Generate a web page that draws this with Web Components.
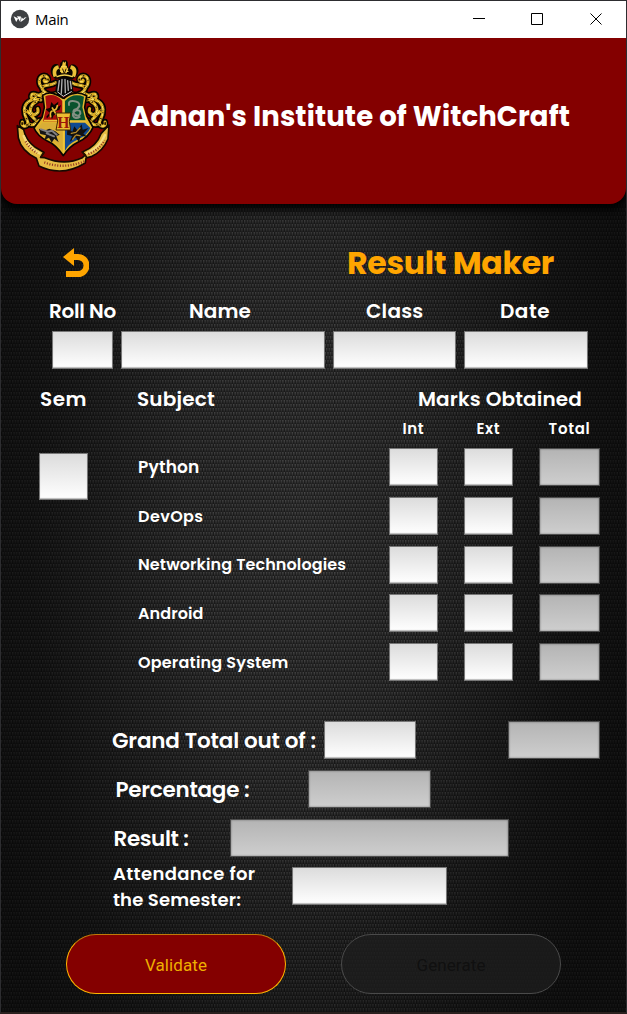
<!DOCTYPE html>
<html lang="en">
<head>
<meta charset="utf-8">
<title>Main</title>
<style>
html,body{margin:0;padding:0;background:#111}
body{font-family:Poppins,Inter,"Open Sans",sans-serif;color:#fff;overflow:hidden}
</style>
</head>
<body>
<app-window></app-window>
<script>
function define(name, html, extra) {
  customElements.define(name, class extends HTMLElement {
    connectedCallback() {
      if (this.shadowRoot) return;
      this.attachShadow({mode: 'open'}).innerHTML = html;
      if (extra) extra(this, this.shadowRoot);
    }
  });
}

/* Text label whose tracking is adjusted so that the text spans the given width. */
define('fit-label', `<style>
:host{display:block;white-space:nowrap;font-weight:600;line-height:1;align-self:center}
</style><span><slot></slot></span>`, (host, root) => {
  const w = +host.getAttribute('w'), span = root.querySelector('span');
  host.style.fontSize = host.getAttribute('size') + 'px';
  const n = host.textContent.length;
  const natural = span.getBoundingClientRect().width;
  span.style.letterSpacing = ((w - natural) / n).toFixed(3) + 'px';
});

/* Text entry; the "off" attribute gives the disabled look. */
define('mark-field', `<style>
:host{display:block;box-sizing:border-box;height:38px;border:1px solid #777;background:linear-gradient(#dcdcdc,#fff);box-shadow:inset 0 -1px 1px #bbb}
:host([off]){border-color:#4c4c4c;background:linear-gradient(#b4b4b4,#cecece);box-shadow:inset 0 0 2px #666}
:host([tall]){height:47px}
</style>`);

define('title-bar', `<style>
:host{display:flex;height:37px;background:#fff;align-items:center;color:#000}
.logo{margin:-2px 0 0 9px;width:20px;height:20px}
span.t{font:15px/20px "Open Sans",sans-serif;flex:1;margin:-1px 0 0 5px;letter-spacing:-.35px}
.btns{margin:-2px 24px 0 0;width:132px;height:14px}
</style>
<svg class="logo" viewBox="0 0 20 20"><circle cx="10" cy="10" r="9.2" fill="#3d3f42"/><path d="M3.600 7.200 6.200 13 8.200 9.600zM6.900 7.300 10.200 13l.8-5.600zM11.600 8.200l-.9 4.900 3.200-2.400 2.800-2.700-2.500.8-1 1.300z" fill="#fff"/></svg>
<span class="t">Main</span>
<svg class="btns" viewBox="0 0 132 14" fill="none" stroke="#000"><path d="M3 6.500h12M61.500 1.500h11v11h-11zM120.500 1.500l11 11M131.500 1.500l-11 11" stroke-width="1"/></svg>`);

define('school-crest', `<style>:host{display:block;width:95px;height:112px}svg{display:block;width:100%;height:100%}</style>
<svg viewBox="49 180 285 336" stroke-linejoin="round" stroke-linecap="round">
<!-- mantling, left side mirrored to the right -->
<defs><g id="mantle">
<path d="M168 282C146 290 130 276 126 262C116 252 116 234 128 228C142 224 150 238 142 244C134 248 132 242 134 240M126 262C140 252 154 258 168 248M132 290C116 290 102 276 96 284C90 294 102 300 108 292M124 300C92 292 74 310 74 330C72 352 88 360 84 372C78 384 64 378 68 366M110 304C96 312 88 326 94 338C102 350 120 340 114 326M88 372C108 384 110 356 126 360M76 330C90 336 96 350 106 358M150 284C138 276 128 280 118 286"/>
</g></defs>
<g fill="none" stroke="#080400" stroke-width="19"><use href="#mantle"/><use href="#mantle" transform="translate(384) scale(-1 1)"/></g>
<g fill="none" stroke="#dcac22" stroke-width="9"><use href="#mantle"/><use href="#mantle" transform="translate(384) scale(-1 1)"/></g>
<g fill="none" stroke="#2a1a00" stroke-width="5" stroke-dasharray="4 15"><use href="#mantle"/><use href="#mantle" transform="translate(384) scale(-1 1)"/></g>
<g fill="none" stroke="#f8dc5c" stroke-width="4" stroke-dasharray="8 13" stroke-dashoffset="7"><use href="#mantle"/><use href="#mantle" transform="translate(384) scale(-1 1)"/></g>
<!-- plume -->
<path d="M166 236C148 224 150 200 164 193C176 188 180 198 180 206L182 188 186 186 188 181 200 181 204 186 206 206C210 190 224 188 234 202C242 218 230 234 218 238z" fill="#0a0600"/>
<path d="M190 184l4 4 5-4-1 14 8 8-5 14h-16l-6-14 8-8zM176 196c-18 2-20 20-14 36l10-5c-5-13 0-19 6-21zM214 196c18 2 20 20 12 36l-9-5c5-13 0-19-6-21z" fill="#ebc138"/>
<path d="M172 230q22-10 46 0M186 199h14M183 214h22" stroke="#f4d452" stroke-width="4" fill="none"/>
<path d="M189 207l5 14 5-14" stroke="#241500" stroke-width="3" fill="none"/>
<!-- helmet -->
<path d="M172 240q22-14 44 0l5 32-14 17h-30l-10-17z" fill="#080808"/>
<path d="M179 242l-4 30M187 238l-2 42M196 238l1 40M204 242l2 29M212 244l3 22" stroke="#b2b2b2" stroke-width="4" fill="none"/>
<path d="M174 276l17 13 24-14" stroke="#ddd" stroke-width="3" fill="none"/>
<!-- shield -->
<path d="M129 286Q144 276 160 280 176 284 192 296 208 282 224 280 242 276 261 287L255 322 261 348 280 382Q268 411 236 426 210 438 191 467 169 434 143 423 113 408 103 384L127 352 134 322z" fill="#e3b62e" stroke="#090400" stroke-width="5"/>
<path d="M137 289q28-12 51 14v61h-58l10-42z" fill="#a80d0d"/>
<path d="M196 303q23-26 57-13l-5 32 10 40h-62z" fill="#08522d"/>
<path d="M128 368h60v84q-18-28-44-36-25-13-33-30z" fill="#d9ae36"/>
<path d="M196 368h60l16 16q-8 22-39 35-27 12-37 33z" fill="#114a91"/>
<path d="M140 350l10-12-12-10 13-5 4-17 8 9 13-10-2 16 10-6-5 15-12 3 8 13-12-2-6 13-6-12-9 10z" fill="#0a0500"/>
<path d="M153 350q-4-17 8-18 10-2 12-15M158 324l12 20" stroke="#e9ba31" stroke-width="5" fill="none"/>
<path d="M208 315q-3-14 13-12 20 2 18 15-5 10-15 11-6 6 1 14 12 9 17-2 1-12-12-10-12 4-10 16 7 12 20 4" stroke="#829083" stroke-width="6" fill="none"/>
<path d="M118 386l16 6 15-6 18 8 13 10-10 5 7 18-13-11-8 12-8-15-14 7 5-14-17-4z" fill="#151515"/>
<path d="M124 388l20 7 13-3 14 12M141 400l22 9" stroke="#808084" stroke-width="6" fill="none"/>
<path d="M203 384l15 11 6-16 9 12 13-18 3 16 18-5-16 17 12 9-20-3-5 20-10-15-18 14 7-18-15-4z" fill="#111"/>
<path d="M215 400l14-3 12-13M230 405l11 2M219 418l8-11" stroke="#b68c2b" stroke-width="4" fill="none"/>
<path d="M191 299v44M192 391v66M134 361h38M212 363h46" stroke="#edc53c" stroke-width="4"/>
<path d="M170 339h43l-4 25 4 26h-44l5-26z" fill="#edbd31" stroke="#402600" stroke-width="3"/>
<text x="191" y="384" text-anchor="middle" font-family="Liberation Serif,serif" font-weight="bold" font-size="47" fill="#9c1809">H</text>
<!-- ribbon -->
<path d="M53 377l19 12q6 32 35 53l25 15-9 15 12 1q60 25 113 0l9-8-9-9q43-17 56-55l24-26-3 42q-14 35-48 52l-18 5-2 15q-70 43-139 9l-8-23q-45-22-54-61z" fill="#e7bc42" stroke="#160900" stroke-width="5"/>
<path d="M72 408q13 35 48 52M262 459q39-17 54-54" fill="none" stroke="#f5dc80" stroke-width="7"/>
<path d="M78 424q12 22 34 35M266 462q31-11 49-41M134 487q57 22 121-3" stroke="#8e3022" stroke-width="7" stroke-dasharray="3 5" fill="none" stroke-linecap="butt"/>
<path d="M123 472l10-14M248 456l12 14" stroke="#241000" stroke-width="5"/>
</svg>`);

define('school-header', `<style>
:host{display:flex;height:166px;background:#840000;border-radius:0 0 16px 16px;box-shadow:0 3px 10px 3px #000;position:relative;clip-path:inset(0 0 -20px 0)}
school-crest{margin:22px 0 0 15px}
fit-label{margin:65px 0 0 19px;align-self:flex-start;font-weight:700}
</style><school-crest></school-crest><fit-label w="440" size="27.5">Adnan's Institute of WitchCraft</fit-label>`);

define('carbon-cloth', `<style>:host{display:block;width:100%;height:100%}svg{display:block;width:100%;height:100%}</style>
<svg><defs>
<linearGradient id="b" x2="0" y2="1"><stop stop-color="#4e4e4e"/><stop offset="1" stop-color="#2b2b2b"/></linearGradient>
<pattern id="p" width="5.460" height="8" patternUnits="userSpaceOnUse"><rect width="5.460" height="8" fill="#1b1b1b"/>
<path d="M0 0h1.450v3.800H0zM2.730 0h1.450v3.800h-1.450z" fill="url(#b)"/><path d="M1.360 4h1.450v3.800h-1.450zM4.090 4h1.370v3.800h-1.370z" fill="url(#b)"/></pattern>
<radialGradient id="v" gradientUnits="userSpaceOnUse" cx="0" cy="0" r="1" gradientTransform="translate(300 310) scale(335 800)"><stop stop-opacity="0"/><stop offset=".35" stop-opacity=".14"/><stop offset=".8" stop-opacity=".58"/><stop offset="1" stop-opacity=".68"/></radialGradient></defs>
<rect width="100%" height="100%" fill="url(#p)"/><rect width="100%" height="100%" fill="url(#v)"/></svg>`);

define('pill-button', `<style>
:host{display:flex;box-sizing:border-box;width:220px;height:60px;border:1px solid #ffb400;border-top-color:#c07a08;border-radius:30px;background:#840000;color:#efae00;align-items:center;justify-content:center}
:host([off]){border-color:#4a4a4a;background:rgba(30,30,30,.78);color:#101010}
::slotted(*){font-family:Roboto,sans-serif!important;font-weight:400!important;padding-top:3px}
</style><slot></slot>`);

define('marks-row', `<style>
:host{display:grid;grid-template-columns:251px 75px 75px 61px;height:38px;align-items:center}
mark-field{width:49px}mark-field[off]{width:61px}
</style><slot></slot><mark-field></mark-field><mark-field></mark-field><mark-field off></mark-field>`);

define('result-form', `<style>
:host{display:block}
.r{display:flex}
.title{height:56px;padding-top:31px;align-items:center}
.undo{width:26px;height:29px;margin:-2px 0 0 62px}
.title fit-label{margin-left:258px;padding-top:2px;color:#ffa500;font-weight:700}
.heads{display:grid;height:28px;margin-top:6px;grid-template-columns:140px 177px 134px auto;padding-left:48px}
.inputs{display:grid;grid-template-columns:61px 204px 123px 124px;gap:8px;margin:6px 0 0 51px}
.sect{display:grid;grid-template-columns:97px 281px auto;height:28px;margin-top:16px;padding-left:39px}
.sub{display:grid;grid-template-columns:74px 72px auto;height:20px;margin-top:5px;padding-left:401.500px}
.sub fit-label{padding-top:1px}
.marks{display:grid;grid-template-columns:99px 1fr;margin:10px 0 0 38px}
.marks>mark-field{width:49px;margin-top:5px}
.rows{display:grid;row-gap:10.750px}
.rows fit-label{padding-top:1px}
.sum{display:grid;row-gap:10.750px;margin-top:40px}
.sum .r{height:38px;align-items:center}
.sum .r>fit-label{padding-top:2px}
.two{display:grid;row-gap:8px;margin-left:112px;width:179px;padding-top:2px}
.act{gap:55px;margin:29px 0 0 65px}
</style>
<div class="r title"><svg class="undo" viewBox="0 0 26 29"><path d="M0 9 11 0v6h4a11.500 11.500 0 0 1 0 23H3v-6h12a5.500 5.500 0 0 0 0-11h-4v6z" fill="#ffa500"/></svg><fit-label w="207" size="31.5">Result Maker</fit-label></div>
<div class="heads"><fit-label w="67" size="20">Roll No</fit-label><fit-label w="62" size="20">Name</fit-label><fit-label w="57.500" size="20">Class</fit-label><fit-label w="50" size="20">Date</fit-label></div>
<div class="inputs"><mark-field></mark-field><mark-field></mark-field><mark-field></mark-field><mark-field></mark-field></div>
<div class="sect"><fit-label w="47" size="20">Sem</fit-label><fit-label w="78" size="20">Subject</fit-label><fit-label w="164" size="20">Marks Obtained</fit-label></div>
<div class="sub"><fit-label w="21.500" size="15">Int</fit-label><fit-label w="23.500" size="15">Ext</fit-label><fit-label w="42" size="15">Total</fit-label></div>
<div class="marks"><mark-field tall></mark-field><div class="rows">
<marks-row><fit-label w="61.500" size="17">Python</fit-label></marks-row>
<marks-row><fit-label w="65.500" size="16" style="padding-top:2px">DevOps</fit-label></marks-row>
<marks-row><fit-label w="208" size="16">Networking Technologies</fit-label></marks-row>
<marks-row><fit-label w="65.500" size="16">Android</fit-label></marks-row>
<marks-row><fit-label w="150.500" size="16">Operating System</fit-label></marks-row>
</div></div>
<div class="sum">
<div class="r"><fit-label style="margin-left:111px;width:212px" w="204" size="21.5">Grand Total out of :</fit-label><mark-field style="width:92px"></mark-field><mark-field off style="width:92px;margin-left:92px"></mark-field></div>
<div class="r"><fit-label style="margin-left:114.500px;width:192.500px" w="134" size="21.5">Percentage :</fit-label><mark-field off style="width:123px"></mark-field></div>
<div class="r"><fit-label style="margin-left:112.500px;width:116.500px" w="75" size="21.5">Result :</fit-label><mark-field off style="width:279px"></mark-field></div>
<div class="r"><div class="two"><fit-label w="142.500" size="18">Attendance for</fit-label><fit-label w="128" size="18">the Semester:</fit-label></div><mark-field style="width:155px"></mark-field></div>
</div>
<div class="r act"><pill-button><fit-label w="62" size="17">Validate</fit-label></pill-button><pill-button off><fit-label w="69" size="17">Generate</fit-label></pill-button></div>`);

define('app-window', `<style>
:host{display:block;box-sizing:border-box;width:627px;height:1014px;border:1px solid #2d2d30;border-bottom:2px solid #2a201e;overflow:hidden}
.body{display:grid;height:808px}
.body>*{grid-area:1/1;min-width:0;min-height:0}
result-form{position:relative}
</style><title-bar></title-bar><school-header></school-header><div class="body"><carbon-cloth></carbon-cloth><result-form></result-form></div>`);
</script>
</body>
</html>
